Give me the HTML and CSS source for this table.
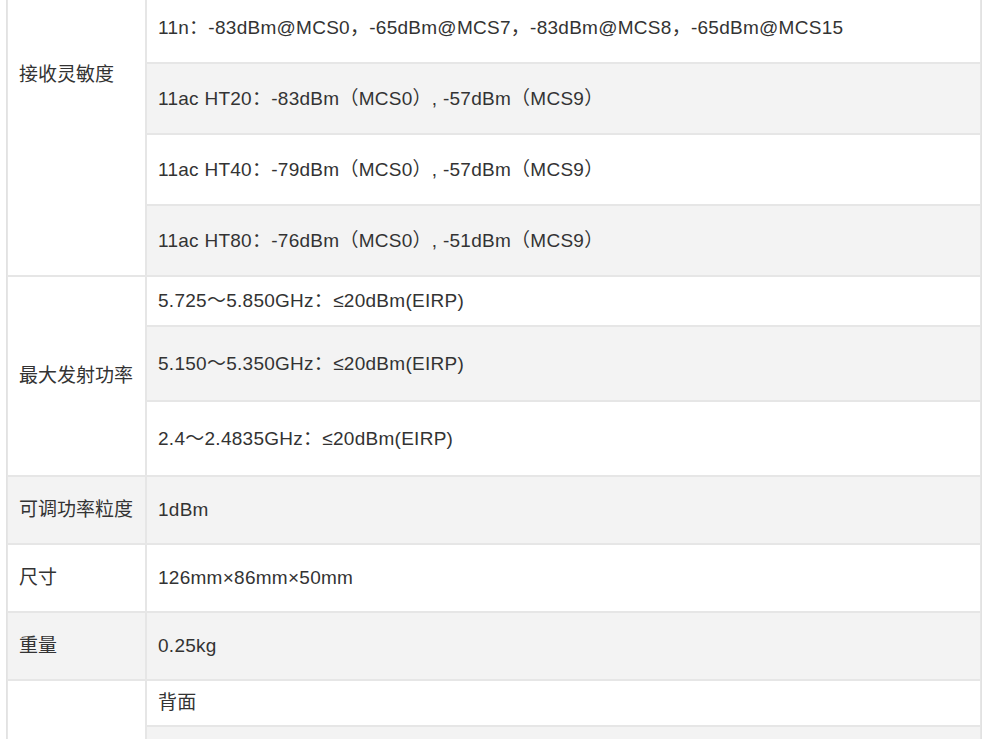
FILE: index.html
```html
<!DOCTYPE html>
<html lang="zh-CN">
<head>
<meta charset="utf-8">
<title>参数</title>
<link rel="stylesheet" href="styles.css">
</head>
<body>
<div class="page">
  <table class="spec">
    <tbody>
      <tr class="h71">
        <td class="label" rowspan="6">接收灵敏度</td>
        <td>11b：-97dBm@1Mbps，-89dBm@11Mbps</td>
      </tr>
      <tr class="h48">
        <td>11g：-91dBm@6Mbps，-74dBm@54Mbps</td>
      </tr>
      <tr class="h70">
        <td>11n：-83dBm@MCS0，-65dBm@MCS7，-83dBm@MCS8，-65dBm@MCS15</td>
      </tr>
      <tr class="h71">
        <td>11ac HT20：-83dBm（MCS0）, -57dBm（MCS9）</td>
      </tr>
      <tr class="h71">
        <td>11ac HT40：-79dBm（MCS0）, -57dBm（MCS9）</td>
      </tr>
      <tr class="h71">
        <td>11ac HT80：-76dBm（MCS0）, -51dBm（MCS9）</td>
      </tr>
      <tr class="h50">
        <td class="label" rowspan="3">最大发射功率</td>
        <td>5.725～5.850GHz：≤20dBm(EIRP)</td>
      </tr>
      <tr class="h75">
        <td>5.150～5.350GHz：≤20dBm(EIRP)</td>
      </tr>
      <tr class="h75">
        <td>2.4～2.4835GHz：≤20dBm(EIRP)</td>
      </tr>
      <tr class="h68">
        <td class="label">可调功率粒度</td>
        <td>1dBm</td>
      </tr>
      <tr class="h68">
        <td class="label">尺寸</td>
        <td>126mm×86mm×50mm</td>
      </tr>
      <tr class="h68">
        <td class="label">重量</td>
        <td>0.25kg</td>
      </tr>
      <tr class="h46">
        <td class="label" rowspan="2"></td>
        <td>背面</td>
      </tr>
      <tr class="h71">
        <td></td>
      </tr>
    </tbody>
  </table>
</div>
</body>
</html>
```

FILE: styles.css
```css
html, body {
  margin: 0;
  padding: 0;
  background: #ffffff;
}

.page {
  padding-left: 6px;
  width: 976px;
  overflow: hidden;
}

.spec {
  width: 976px;
  margin-top: -127px;
  border-collapse: separate;
  border-spacing: 0;
  border: 1px solid #e2e2e2;
  font-family: "Liberation Sans", "Noto Sans CJK SC", sans-serif;
  font-size: 19px;
  letter-spacing: 0.27px;
  color: #333333;
  table-layout: fixed;
}

.spec td {
  border: 1px solid #e6e6e6;
  padding: 0 11px;
  vertical-align: middle;
  text-align: left;
  line-height: 26px;
  box-sizing: border-box;
}

.spec td.label {
  width: 139px;
  white-space: nowrap;
  letter-spacing: 0;
}

.spec tr:nth-child(even) td {
  background: #f3f3f3;
}

.spec tr:nth-child(odd) td {
  background: #ffffff;
}

.h46 td { height: 46px; }
.h48 td { height: 48px; }
.h50 td { height: 50px; }
.h68 td { height: 68px; }
.h70 td { height: 70px; }
.h71 td { height: 71px; }
.h75 td { height: 75px; }
```
